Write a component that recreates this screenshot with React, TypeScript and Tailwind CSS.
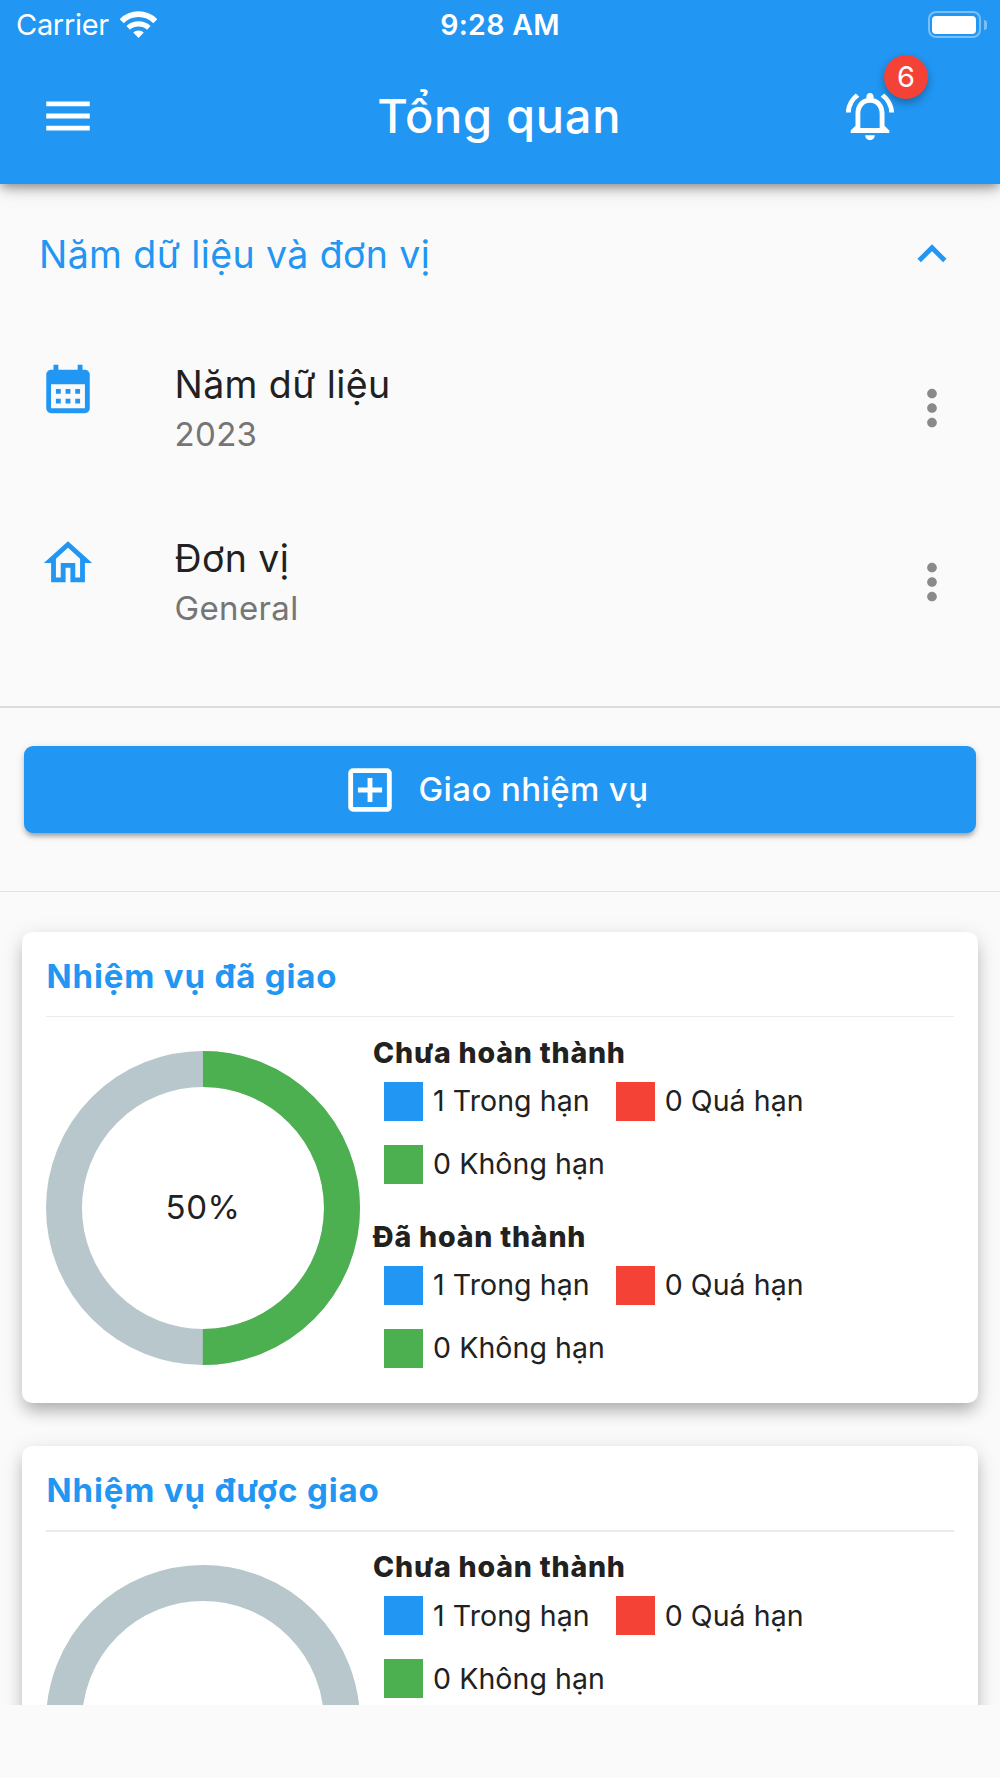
import {
  MdMenu,
  MdOutlineNotificationsActive,
  MdExpandLess,
  MdCalendarMonth,
  MdOutlineHome,
  MdMoreVert,
  MdOutlineAddBox,
} from 'react-icons/md';

const settings = [
  { icon: MdCalendarMonth, title: 'Năm dữ liệu', value: '2023' },
  { icon: MdOutlineHome, title: 'Đơn vị', value: 'General' },
];

const cards = [
  { title: 'Nhiệm vụ đã giao', percent: 50, groups: ['Chưa hoàn thành', 'Đã hoàn thành'] },
  { title: 'Nhiệm vụ được giao', percent: 0, groups: ['Chưa hoàn thành'] },
];

function WifiIcon() {
  return (
    <svg width="37" height="27" viewBox="0 0 37 27" fill="none" stroke="white">
      <path d="M1.7 10.2A23.6 23.6 0 0 1 35.3 10.2" strokeWidth="5.6" />
      <path d="M8.2 16.8A15.3 15.3 0 0 1 28.8 16.8" strokeWidth="5.2" />
      <path d="M13.2 21.4A8.5 8.5 0 0 1 23.8 21.4L18.5 27Z" fill="white" stroke="none" />
    </svg>
  );
}

function Battery() {
  return (
    <div className="flex items-center gap-[3px]">
      <div className="w-[53px] h-[27px] rounded-[8px] border-2 border-white/40 p-[2.5px]">
        <div className="h-full w-[44px] rounded-[4px] bg-white" />
      </div>
      <div className="w-[3px] h-[10px] rounded-r-full bg-white/40" />
    </div>
  );
}

function Donut({ percent }: { percent: number }) {
  const length = 2 * Math.PI * 139;
  return (
    <div className="relative w-[314px] h-[314px] shrink-0 flex items-center justify-center">
      <svg width="314" height="314" viewBox="0 0 314 314" fill="none" strokeWidth="36" className="absolute inset-0">
        <circle cx="157" cy="157" r="139" stroke="#b8c7cc" />
        {percent > 0 && (
          <circle
            cx="157"
            cy="157"
            r="139"
            stroke="#4caf50"
            strokeDasharray={`${(length * percent) / 100} ${length}`}
            transform="rotate(-90 157 157)"
          />
        )}
      </svg>
      {percent > 0 && <span className="pb-[2px] text-[33px] leading-10 tracking-[0.5px]">{percent}%</span>}
    </div>
  );
}

function Legend({ color, label }: { color: string; label: string }) {
  return (
    <div className="flex items-center gap-[10px] h-[39px]">
      <div className={`w-[39px] h-[39px] ${color}`} />
      <span className="text-[28.5px] leading-9 tracking-[0.08px] whitespace-nowrap">{label}</span>
    </div>
  );
}

function Group({ title }: { title: string }) {
  return (
    <div className="h-[184px]">
      <h3 className="text-[28.5px] leading-9 font-extrabold tracking-[0.8px]">{title}</h3>
      <div className="pl-[11px] pt-[11px] flex flex-wrap gap-x-[26px] gap-y-6">
        <Legend color="bg-[#2196f3]" label="1 Trong hạn" />
        <Legend color="bg-[#f44336]" label="0 Quá hạn" />
        <Legend color="bg-[#4caf50]" label="0 Không hạn" />
      </div>
    </div>
  );
}

function TaskCard({ title, percent, groups }: { title: string; percent: number; groups: string[] }) {
  return (
    <section className="h-[471.5px] shrink-0 rounded-[10px] bg-white px-6 shadow-[0_10px_16px_-3px_rgba(0,0,0,0.24),0_5px_22px_rgba(0,0,0,0.12)]">
      <h2 className="h-[84px] pt-[24px] pl-[0.5px] text-[33px] leading-10 font-bold tracking-[0.85px] text-[#2196f3]">{title}</h2>
      <div className="h-[1.5px] bg-[#ebebeb]" />
      <div className="flex gap-[13px] pt-[17.5px]">
        <div className="pt-[16px]">
          <Donut percent={percent} />
        </div>
        <div className="w-[500px]">
          {groups.map((group) => (
            <Group key={group} title={group} />
          ))}
        </div>
      </div>
    </section>
  );
}

export default function App() {
  return (
    <div className="w-[1000px] h-[1778px] overflow-hidden bg-[#fafafa] font-['Inter',sans-serif] text-[#212121]">
      <header className="relative z-10 h-[183.5px] bg-[#2196f3] text-white shadow-[0_4px_9px_-2px_rgba(0,0,0,0.3),0_6px_12px_rgba(0,0,0,0.14),0_2px_24px_rgba(0,0,0,0.12)]">
        <div className="grid grid-cols-3 items-center h-[49px] px-[13px]">
          <div className="flex items-center gap-[11px] pl-[3px]">
            <span className="pt-px text-[29px] leading-9 tracking-[-0.3px]">Carrier</span>
            <WifiIcon />
          </div>
          <span className="pt-px text-center text-[28.5px] leading-9 font-semibold tracking-[0.3px]">9:28 AM</span>
          <div className="flex justify-end">
            <Battery />
          </div>
        </div>
        <div className="flex items-center justify-between h-[134px] pl-[38.5px] pr-[101px]">
          <MdMenu size={58} />
          <h1 className="pl-[61px] text-[47px] leading-[58px] font-medium tracking-[0.7px]">Tổng quan</h1>
          <div className="relative">
            <MdOutlineNotificationsActive size={58} />
            <div className="absolute left-[43px] -top-[32px] w-[44px] h-[44px] rounded-full bg-[#f44336] flex items-center justify-center text-[29px] leading-9 shadow-[0_4px_8px_rgba(0,0,0,0.3)]">
              6
            </div>
          </div>
        </div>
      </header>

      <main className="h-[1521.5px] overflow-hidden flex flex-col">
        <div className="flex items-center justify-between h-[138px] shrink-0 pt-[3px] pl-[39px] pr-[39px] text-[#2196f3]">
          <span className="pt-px text-[37.5px] leading-[46px] tracking-[0.4px]">Năm dữ liệu và đơn vị</span>
          <MdExpandLess size={58} />
        </div>

        {settings.map(({ icon: Icon, title, value }) => (
          <div key={title} className="flex h-[174px] shrink-0 pl-[38.5px] pr-[39px]">
            <Icon size={58} className="mt-[38px] text-[#2196f3]" />
            <div className="flex-1 pl-[78px] pt-[40px]">
              <div className="text-[37.5px] leading-[46px] tracking-[0.4px]">{title}</div>
              <div className="mt-[6px] text-[33px] leading-10 tracking-[0.35px] text-[#757575]">{value}</div>
            </div>
            <MdMoreVert size={58} className="mt-[57px] text-[#8a8a8a]" />
          </div>
        ))}

        <div className="mt-9 h-[2.5px] shrink-0 bg-[#dcdcdc]" />

        <div className="px-6 pt-[38px] pb-[58px]">
          <button className="flex items-center justify-center gap-5 w-full h-[87px] rounded-[9px] bg-[#2196f3] pr-[11px] text-white shadow-[0_5px_4px_-3px_rgba(0,0,0,0.2),0_4px_5px_rgba(0,0,0,0.14),0_2px_10px_rgba(0,0,0,0.12)]">
            <MdOutlineAddBox size={58} />
            <span className="pb-[2px] text-[33px] leading-10 font-medium tracking-[0.4px]">Giao nhiệm vụ</span>
          </button>
        </div>

        <div className="h-px shrink-0 bg-[#e2e2e2]" />

        <div className="flex flex-col gap-[43px] px-[22px] pt-[39.5px]">
          {cards.map((card) => (
            <TaskCard key={card.title} {...card} />
          ))}
        </div>
      </main>
    </div>
  );
}
